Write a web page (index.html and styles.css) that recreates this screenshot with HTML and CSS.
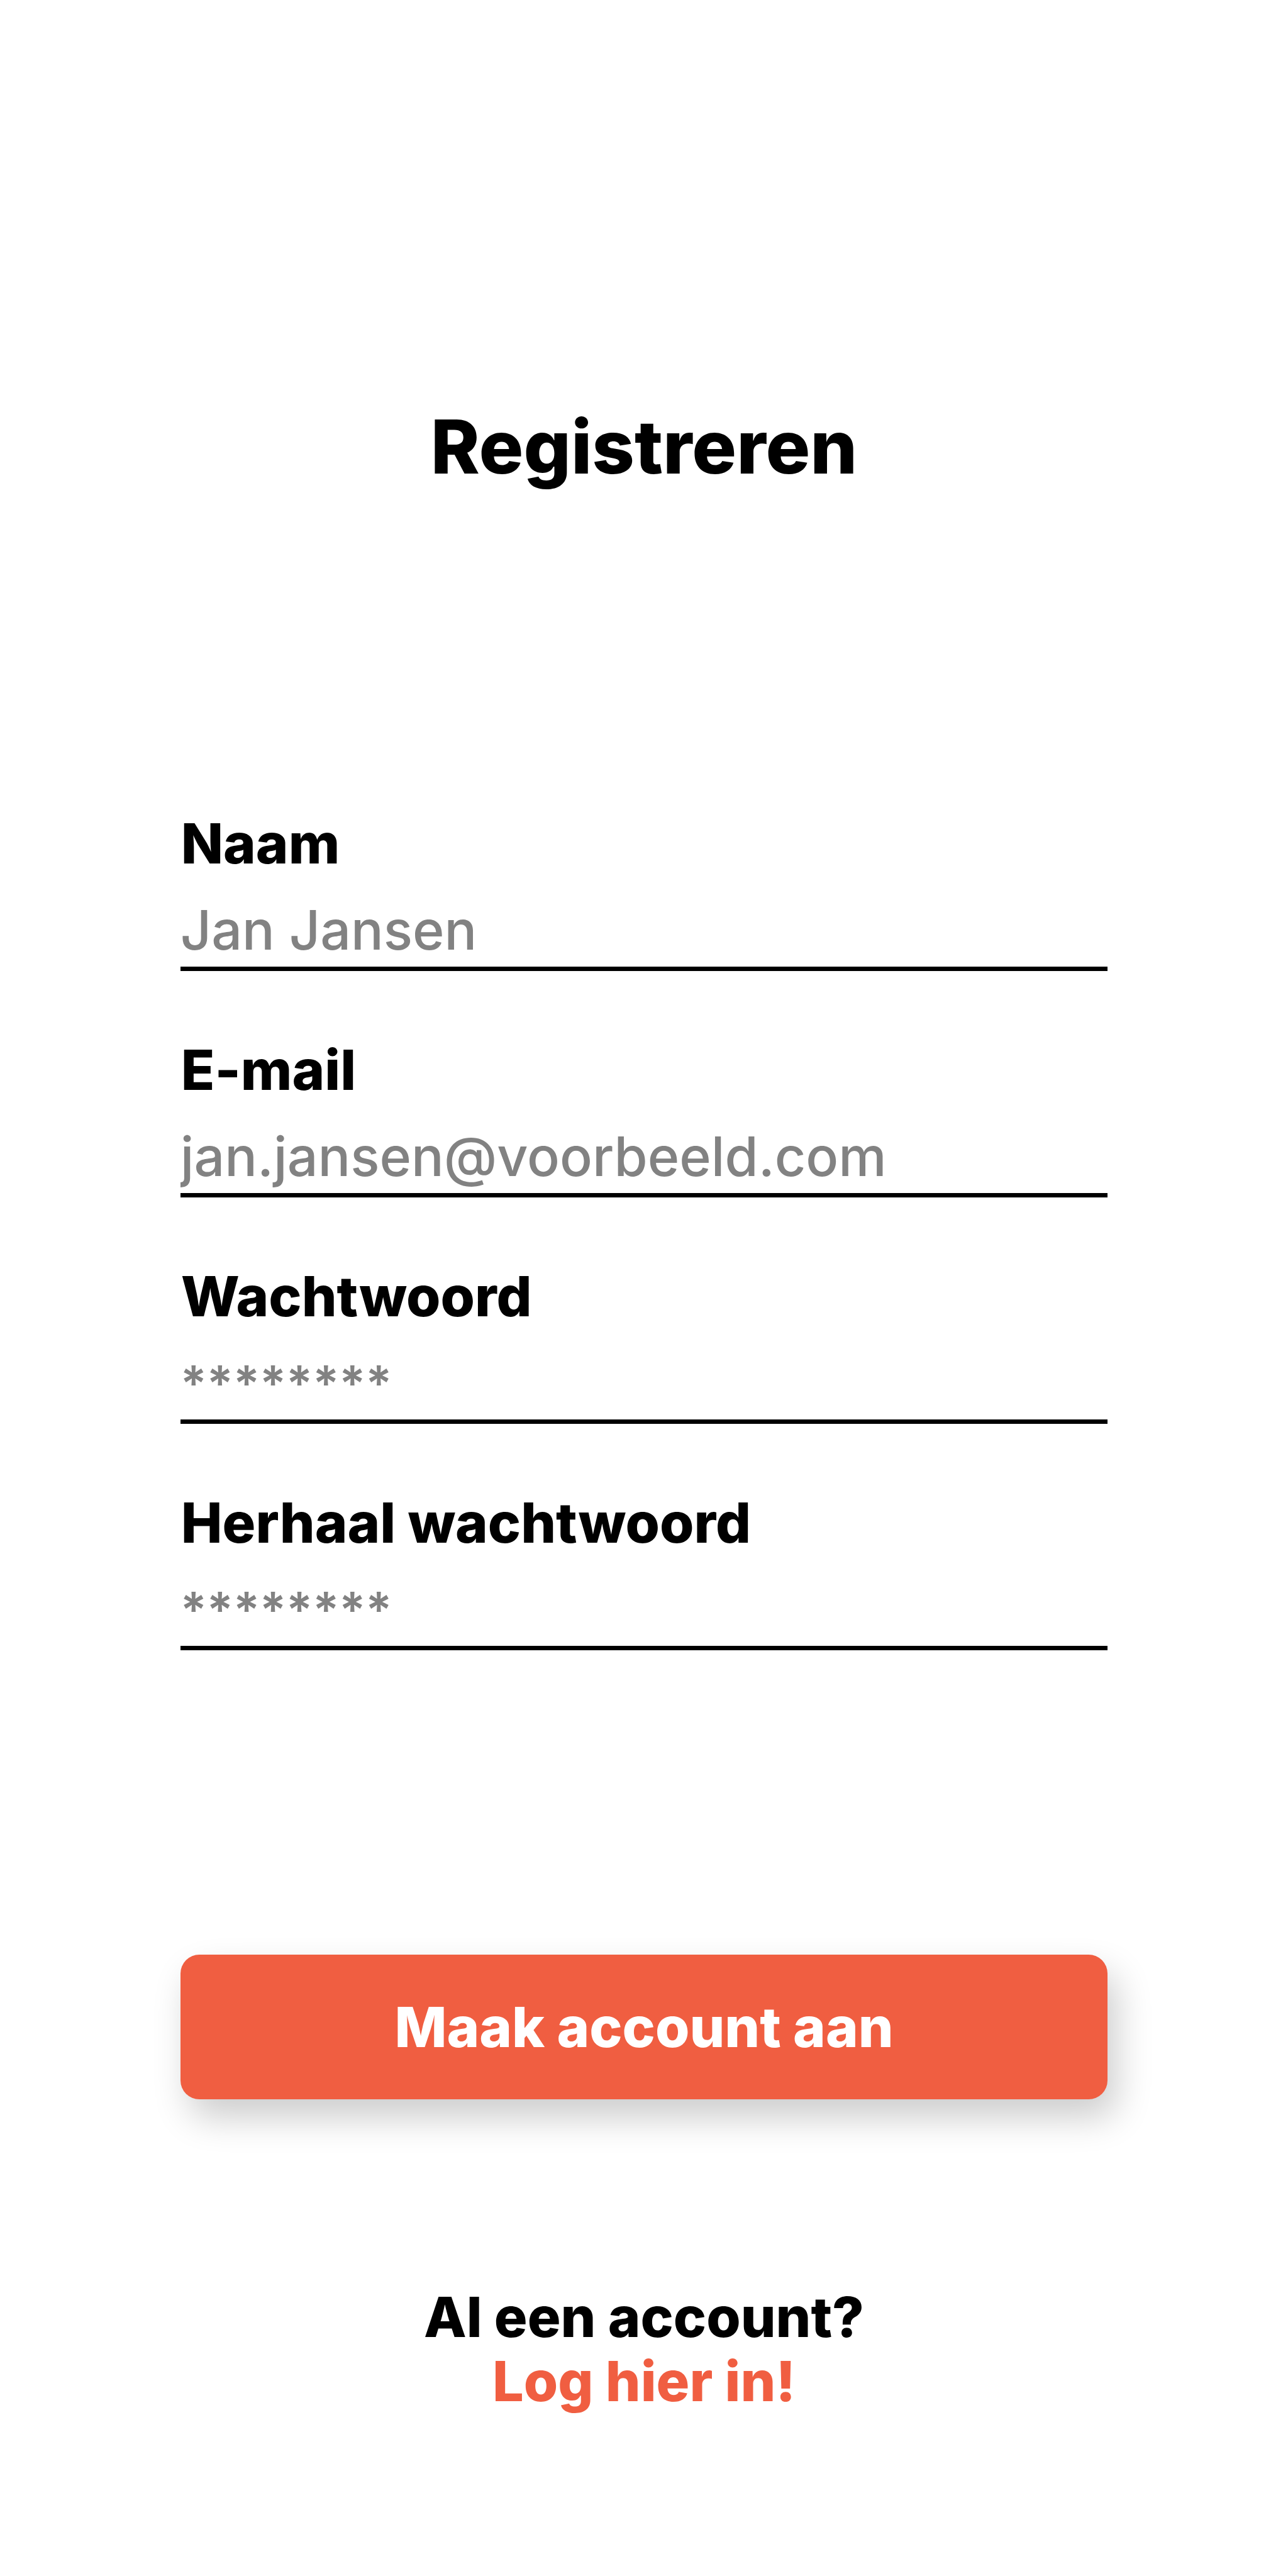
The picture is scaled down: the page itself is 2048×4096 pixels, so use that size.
FILE: index.html
```
<!DOCTYPE html>
<html lang="nl">
<head>
  <meta charset="utf-8">
  <meta name="viewport" content="width=device-width, initial-scale=1">
  <title>Registreren</title>
  <link rel="stylesheet" href="styles.css">
</head>
<body>
  <main class="page">
    <h1 class="title">Registreren</h1>
    <form class="form">
      <div class="fields">
        <div class="field">
          <label class="label" for="name">Naam</label>
          <input class="input" id="name" type="text" placeholder="Jan Jansen">
        </div>
        <div class="field">
          <label class="label" for="email">E-mail</label>
          <input class="input" id="email" type="email" placeholder="jan.jansen@voorbeeld.com">
        </div>
        <div class="field">
          <label class="label" for="password">Wachtwoord</label>
          <input class="input input-password" id="password" type="password" placeholder="********">
        </div>
        <div class="field">
          <label class="label" for="repeat">Herhaal wachtwoord</label>
          <input class="input input-password" id="repeat" type="password" placeholder="********">
        </div>
      </div>
      <button class="submit" type="submit">Maak account aan</button>
    </form>
    <footer class="footer">
      <p class="question">Al een account?</p>
      <a class="login" href="#login">Log hier in!</a>
    </footer>
  </main>
</body>
</html>
```
FILE: styles.css
```
* {
  box-sizing: border-box;
}

body {
  margin: 0;
  background: #ffffff;
  color: #000000;
  font-family: Inter, "Liberation Sans", sans-serif;
  font-size: 88px;
  font-weight: 800;
  line-height: 102px;
}

.page {
  display: flex;
  flex-direction: column;
  min-height: 100vh;
  padding: 640px 14% 176px;
}

.title {
  margin: 0 0 510px;
  font-size: 118px;
  font-weight: 800;
  line-height: 140px;
  text-align: center;
}

.form {
  display: flex;
  flex-direction: column;
  gap: 484px;
}

.fields {
  display: grid;
  gap: 106px;
}

.field {
  display: flex;
  flex-direction: column;
  gap: 36px;
}

.label {
  padding-left: 1px;
}

.input {
  width: 100%;
  height: 116px;
  padding: 0 0 7px;
  border: 0;
  border-bottom: 7px solid #000000;
  border-radius: 0;
  outline: 0;
  background: transparent;
  color: #000000;
  font: inherit;
  font-size: 86px;
  font-weight: 500;
}

.input-password {
  font-size: 78px;
  font-weight: 600;
}

.input::placeholder {
  color: #828282;
  opacity: 1;
}

.submit {
  padding: 64px 0;
  border: 0;
  border-radius: 30px;
  background: #f05e41;
  box-shadow: 14px 29px 57px rgba(0, 0, 0, 0.2);
  color: #ffffff;
  font: inherit;
  cursor: pointer;
}

.footer {
  margin-top: 295px;
  text-align: center;
}

.question {
  margin: 0;
}

.login {
  color: #f05e41;
  text-decoration: none;
}
```
